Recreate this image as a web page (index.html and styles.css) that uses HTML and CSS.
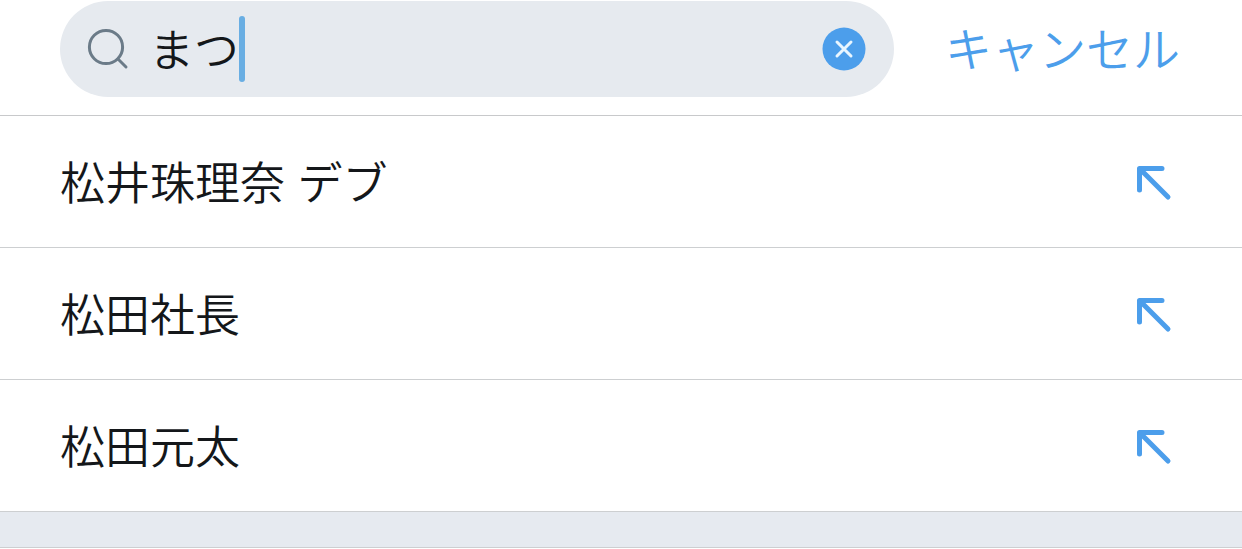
FILE: index.html
```html
<!DOCTYPE html>
<html lang="ja">
<head>
<meta charset="utf-8">
<meta name="viewport" content="width=device-width, initial-scale=1">
<title>検索</title>
<link rel="stylesheet" href="styles.css">
</head>
<body>
<header class="topbar">
  <form class="search" role="search">
    <svg class="search-icon" viewBox="0 0 42 42" aria-hidden="true"><circle cx="19" cy="19" r="16.6"/><path d="M31 31l8 8"/></svg>
    <input class="search-input" type="text" value="まつ" aria-label="検索">
    <span class="caret" aria-hidden="true"></span>
    <button class="clear" type="button" aria-label="クリア">
      <svg class="clear-icon" viewBox="0 0 44 44" aria-hidden="true"><circle cx="22" cy="22" r="21.5"/><path d="M15 15l14 14M29 15L15 29"/></svg>
    </button>
  </form>
  <button class="cancel" type="button">キャンセル</button>
</header>
<main>
  <ul class="results">
    <li><a class="result" href="#"><span>松井珠理奈 デブ</span><svg class="arrow" viewBox="0 0 36 36" aria-hidden="true"><path d="M3.500 25V3.500H26M4 4l28 28"/></svg></a></li>
    <li><a class="result" href="#"><span>松田社長</span><svg class="arrow" viewBox="0 0 36 36" aria-hidden="true"><path d="M3.500 25V3.500H26M4 4l28 28"/></svg></a></li>
    <li><a class="result" href="#"><span>松田元太</span><svg class="arrow" viewBox="0 0 36 36" aria-hidden="true"><path d="M3.500 25V3.500H26M4 4l28 28"/></svg></a></li>
  </ul>
  <div class="section-gap"></div>
</main>
</body>
</html>
```
FILE: styles.css
```css
* {
  box-sizing: border-box;
}

body {
  margin: 0;
  background: #fff;
  color: #14171a;
  font-family: "Liberation Sans", "Noto Sans CJK JP", sans-serif;
  font-size: 45px;
  font-weight: 350;
}

button,
input {
  margin: 0;
  padding: 0;
  border: 0;
  background: none;
  font: inherit;
  color: inherit;
}

.topbar {
  display: flex;
  align-items: center;
  gap: 51px;
  padding: 1px 62px 18px 60px;
  border-bottom: 1px solid #c8c9cb;
}

.search {
  display: flex;
  flex: 1;
  align-items: center;
  min-width: 0;
  height: 96px;
  padding: 0 28px 0 27px;
  border-radius: 48px;
  background: #e6eaef;
}

.search-icon {
  flex: none;
  width: 42px;
  height: 42px;
  margin-right: 20px;
  fill: none;
  stroke: #6b7b88;
  stroke-width: 3;
  stroke-linecap: round;
}

.search-input {
  width: 2em;
  height: 66px;
  padding-bottom: 4px;
  outline: none;
}

.caret {
  width: 6px;
  height: 66px;
  border-radius: 3px;
  background: #69aee3;
}

.clear {
  flex: none;
  width: 44px;
  height: 44px;
  margin-left: auto;
}

.clear-icon {
  display: block;
  fill: #4c9eeb;
}

.clear-icon path {
  stroke: #e9f6ff;
  stroke-width: 3;
  stroke-linecap: round;
}

.cancel {
  padding-top: 4px;
  color: #4c9eeb;
  font-size: 47px;
  line-height: 66px;
  white-space: nowrap;
}

.results {
  margin: 0;
  padding: 0;
  list-style: none;
}

.result {
  display: flex;
  align-items: center;
  justify-content: space-between;
  padding: 36px 70px 29px 60px;
  border-bottom: 1px solid #cdcfd1;
  color: inherit;
  line-height: 66px;
  text-decoration: none;
}

.arrow {
  flex: none;
  width: 36px;
  height: 36px;
  margin-bottom: 4px;
  fill: none;
  stroke: #4c9eeb;
  stroke-width: 5;
  stroke-linecap: round;
  stroke-linejoin: round;
}

.section-gap {
  height: 36px;
  border-bottom: 1px solid #cdcfd1;
  background: #e6eaf0;
}
```
